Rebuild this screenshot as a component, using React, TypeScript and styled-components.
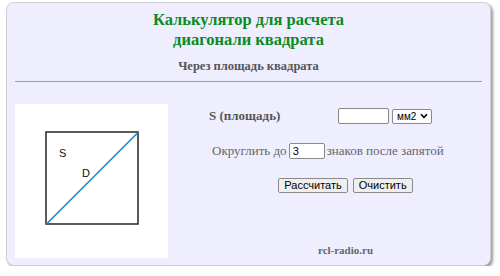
import React from "react";
import styled, { createGlobalStyle } from "styled-components";

const Global = createGlobalStyle`
  html, body { margin: 0; padding: 0; background: #ffffff; }
  body { font-family: "Liberation Serif", "Times New Roman", serif; }
`;

const Card = styled.div`
  box-sizing: border-box;
  margin: 2px 0 0 6px;
  width: 485px;
  height: 264px;
  background: #eeeeff;
  border: 1px solid #cfcfd6;
  border-radius: 8px;
  box-shadow: 2px 2px 3px #9a9a9a;
  padding: 7px 8px 0 8px;
  display: flex;
  flex-direction: column;
`;

const Title = styled.h1`
  margin: 0;
  text-align: center;
  color: #0b8a1f;
  font-size: 16.5px;
  line-height: 20px;
  font-weight: bold;
`;

const Subtitle = styled.h2`
  margin: 8px 0 0 0;
  text-align: center;
  color: #555555;
  font-size: 12.5px;
  line-height: 16px;
  font-weight: bold;
`;

const Rule = styled.hr`
  margin: 7px 0 0 0;
  border: none;
  border-top: 1px solid #a0a0a0;
  height: 0;
`;

const Main = styled.div`
  margin-top: 22px;
  display: grid;
  grid-template-columns: 153px 1fr;
  column-gap: 41px;
`;

const Picture = styled.div`
  background: #ffffff;
  width: 153px;
  height: 154px;
`;

const Form = styled.div`
  display: flex;
  flex-direction: column;
  color: #666666;
  font-size: 13px;
`;

const Row = styled.div<{ $top: number; $indent?: number }>`
  display: flex;
  align-items: center;
  margin-top: ${(p) => p.$top}px;
  padding-left: ${(p) => p.$indent ?? 0}px;
  height: 16px;
`;

const Label = styled.span`
  font-weight: bold;
  color: #555555;
  width: 127px;
`;

const TextInput = styled.input<{ $w: number }>`
  box-sizing: border-box;
  width: ${(p) => p.$w}px;
  height: 16px;
  border: 1px solid #8a8a8a;
  border-radius: 2px;
  background: #ffffff;
  padding: 0 3px;
  font-family: "Liberation Sans", Arial, sans-serif;
  font-size: 11px;
  color: #000;
  margin: 0 2px;
  outline: none;
`;

const SelectWrap = styled.span`
  position: relative;
  display: inline-flex;
  margin-left: 1px;
`;

const UnitSelect = styled.select`
  appearance: none;
  -webkit-appearance: none;
  box-sizing: border-box;
  height: 15px;
  width: 40px;
  border: 1px solid #8a8a8a;
  border-radius: 2px;
  background: #ffffff;
  font-family: "Liberation Sans", Arial, sans-serif;
  font-size: 10px;
  color: #000;
  padding: 0 0 0 4px;
  outline: none;
`;

const Chevron = styled.svg`
  position: absolute;
  right: 4px;
  top: 4px;
  pointer-events: none;
`;

const Buttons = styled.div`
  display: flex;
  justify-content: center;
  gap: 5px;
  margin-top: 19px;
`;

const Button = styled.button`
  box-sizing: border-box;
  height: 15px;
  padding: 0 5px;
  border: 1px solid #8a8a8a;
  border-radius: 2px;
  background: #efefef;
  font-family: "Liberation Sans", Arial, sans-serif;
  font-size: 11px;
  line-height: 13px;
  color: #000;
`;

const Footer = styled.div`
  text-align: center;
  margin-top: 51px;
  font-weight: bold;
  font-size: 11px;
  color: #666666;
`;

const Diagram = () => (
  <svg width="153" height="154" viewBox="0 0 153 154">
    <rect x="31" y="28" width="92" height="92" fill="none" stroke="#333" strokeWidth="1.6" />
    <line x1="31.5" y1="120" x2="123" y2="28.5" stroke="#1a8acb" strokeWidth="1.6" />
    <text x="44" y="53" fontFamily="Liberation Sans, Arial, sans-serif" fontSize="11" fill="#111">S</text>
    <text x="67" y="73" fontFamily="Liberation Sans, Arial, sans-serif" fontSize="11" fill="#111">D</text>
  </svg>
);

export default function App() {
  return (
    <>
      <Global />
      <Card>
        <Title>
          Калькулятор для расчета
          <br />
          диагонали квадрата
        </Title>
        <Subtitle>Через площадь квадрата</Subtitle>
        <Rule />
        <Main>
          <Picture>
            <Diagram />
          </Picture>
          <Form>
            <Row $top={4}>
              <Label>S (площадь)</Label>
              <TextInput $w={51} type="text" defaultValue="" />
              <SelectWrap>
                <UnitSelect defaultValue="mm2">
                  <option value="mm2">мм2</option>
                  <option value="cm2">см2</option>
                  <option value="m2">м2</option>
                </UnitSelect>
                <Chevron width="8" height="6" viewBox="0 0 8 6">
                  <path d="M1 1.2 L4 4.4 L7 1.2" fill="none" stroke="#000" strokeWidth="1.6" />
                </Chevron>
              </SelectWrap>
            </Row>
            <Row $top={19} $indent={3}>
              Округлить до
              <TextInput $w={36} type="text" defaultValue="3" />
              знаков после запятой
            </Row>
            <Buttons>
              <Button>Рассчитать</Button>
              <Button>Очистить</Button>
            </Buttons>
            <Footer>rcl-radio.ru</Footer>
          </Form>
        </Main>
      </Card>
    </>
  );
}
